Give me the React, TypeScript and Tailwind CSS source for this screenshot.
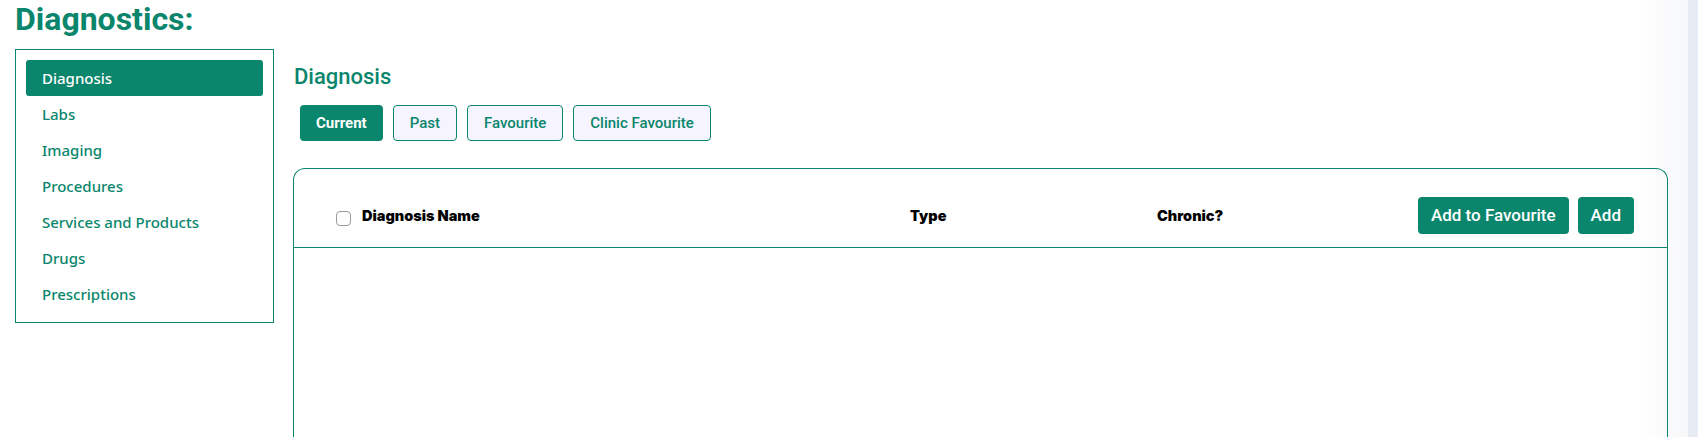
import React from "react";

const teal = "text-[#0a866c]";

const sideItems = [
  "Diagnosis",
  "Labs",
  "Imaging",
  "Procedures",
  "Services and Products",
  "Drugs",
  "Prescriptions",
];

const tabs = ["Current", "Past", "Favourite", "Clinic Favourite"];

const Sidebar: React.FC<{ active: string }> = ({ active }) => {
  return (
    <div className="w-[259px] shrink-0 self-start border border-[#0a866c] p-[10px] font-['Noto_Sans',sans-serif]">
      {sideItems.map((item) => {
        const isActive = item === active;
        return (
          <div
            key={item}
            className={
              isActive
                ? "h-[36px] flex items-center pl-[16px] rounded-[3px] bg-[#0a866c] text-white text-[15px] font-medium"
                : "h-[36px] flex items-center pl-[16px] text-[#0a866c] text-[15px] font-medium"
            }
          >
            {item}
          </div>
        );
      })}
    </div>
  );
};

const Tabs: React.FC<{ current: string }> = ({ current }) => {
  return (
    <div className="flex items-center gap-[10px] ml-[7px] mt-[14px]">
      {tabs.map((t) => {
        return t === current ? (
          <button
            key={t}
            className="h-[36px] px-[16px] rounded-[4px] bg-[#0a866c] text-white text-[15px] font-bold"
          >
            {t}
          </button>
        ) : (
          <button
            key={t}
            className="h-[36px] px-[16px] rounded-[4px] border border-[#0a866c] bg-[#f6f4fe] text-[#0a866c] text-[15px] font-medium"
          >
            {t}
          </button>
        );
      })}
    </div>
  );
};

const DiagnosisTable = () => {
  return (
    <div className="mt-[27px] flex-1 border border-[#0a866c] border-b-0 rounded-t-[12px]">
      <div className="flex items-center pt-[28px] pb-[13px] pr-[33px] border-b border-[#0a866c] font-['Inter',sans-serif] text-[14.5px] font-black text-black">
        <div className="w-[574px] ml-[42px] flex items-center gap-[11px]">
          <span className="w-[15px] h-[15px] mt-[6px] rounded-[4px] border border-[#9a9a9a] bg-white" />
          <span>Diagnosis Name</span>
        </div>
        <div className="w-[247px]">Type</div>
        <div>Chronic?</div>
        <div className="ml-auto flex items-center gap-[9px] font-['Roboto',sans-serif] text-[17px] font-medium text-white">
          <button className="h-[37px] px-[13px] rounded-[4px] bg-[#0a866c]">
            Add to Favourite
          </button>
          <button className="h-[37px] px-[13px] rounded-[4px] bg-[#0a866c]">
            Add
          </button>
        </div>
      </div>
    </div>
  );
};

export default function App() {
  return (
    <div className="flex h-[437px] w-full overflow-hidden font-['Roboto',sans-serif]">
      <div className="flex-1 flex flex-col pl-[15px] pr-[20px] bg-[linear-gradient(to_right,#ffffff_1640px,#f6f7f9_100%)]">
        <h1 className={`text-[32px] leading-[38px] font-bold ${teal}`}>
          Diagnostics:
        </h1>
        <div className="flex flex-1 mt-[11px] gap-[19px]">
          <Sidebar active="Diagnosis" />
          <div className="flex-1 flex flex-col">
            <h2
              className={`mt-[14px] ml-[1px] text-[22px] leading-[28px] font-medium ${teal}`}
            >
              Diagnosis
            </h2>
            <Tabs current="Current" />
            <DiagnosisTable />
          </div>
        </div>
      </div>
      <div className="w-[10px] shrink-0 bg-[#e7ecf4]" />
    </div>
  );
}
